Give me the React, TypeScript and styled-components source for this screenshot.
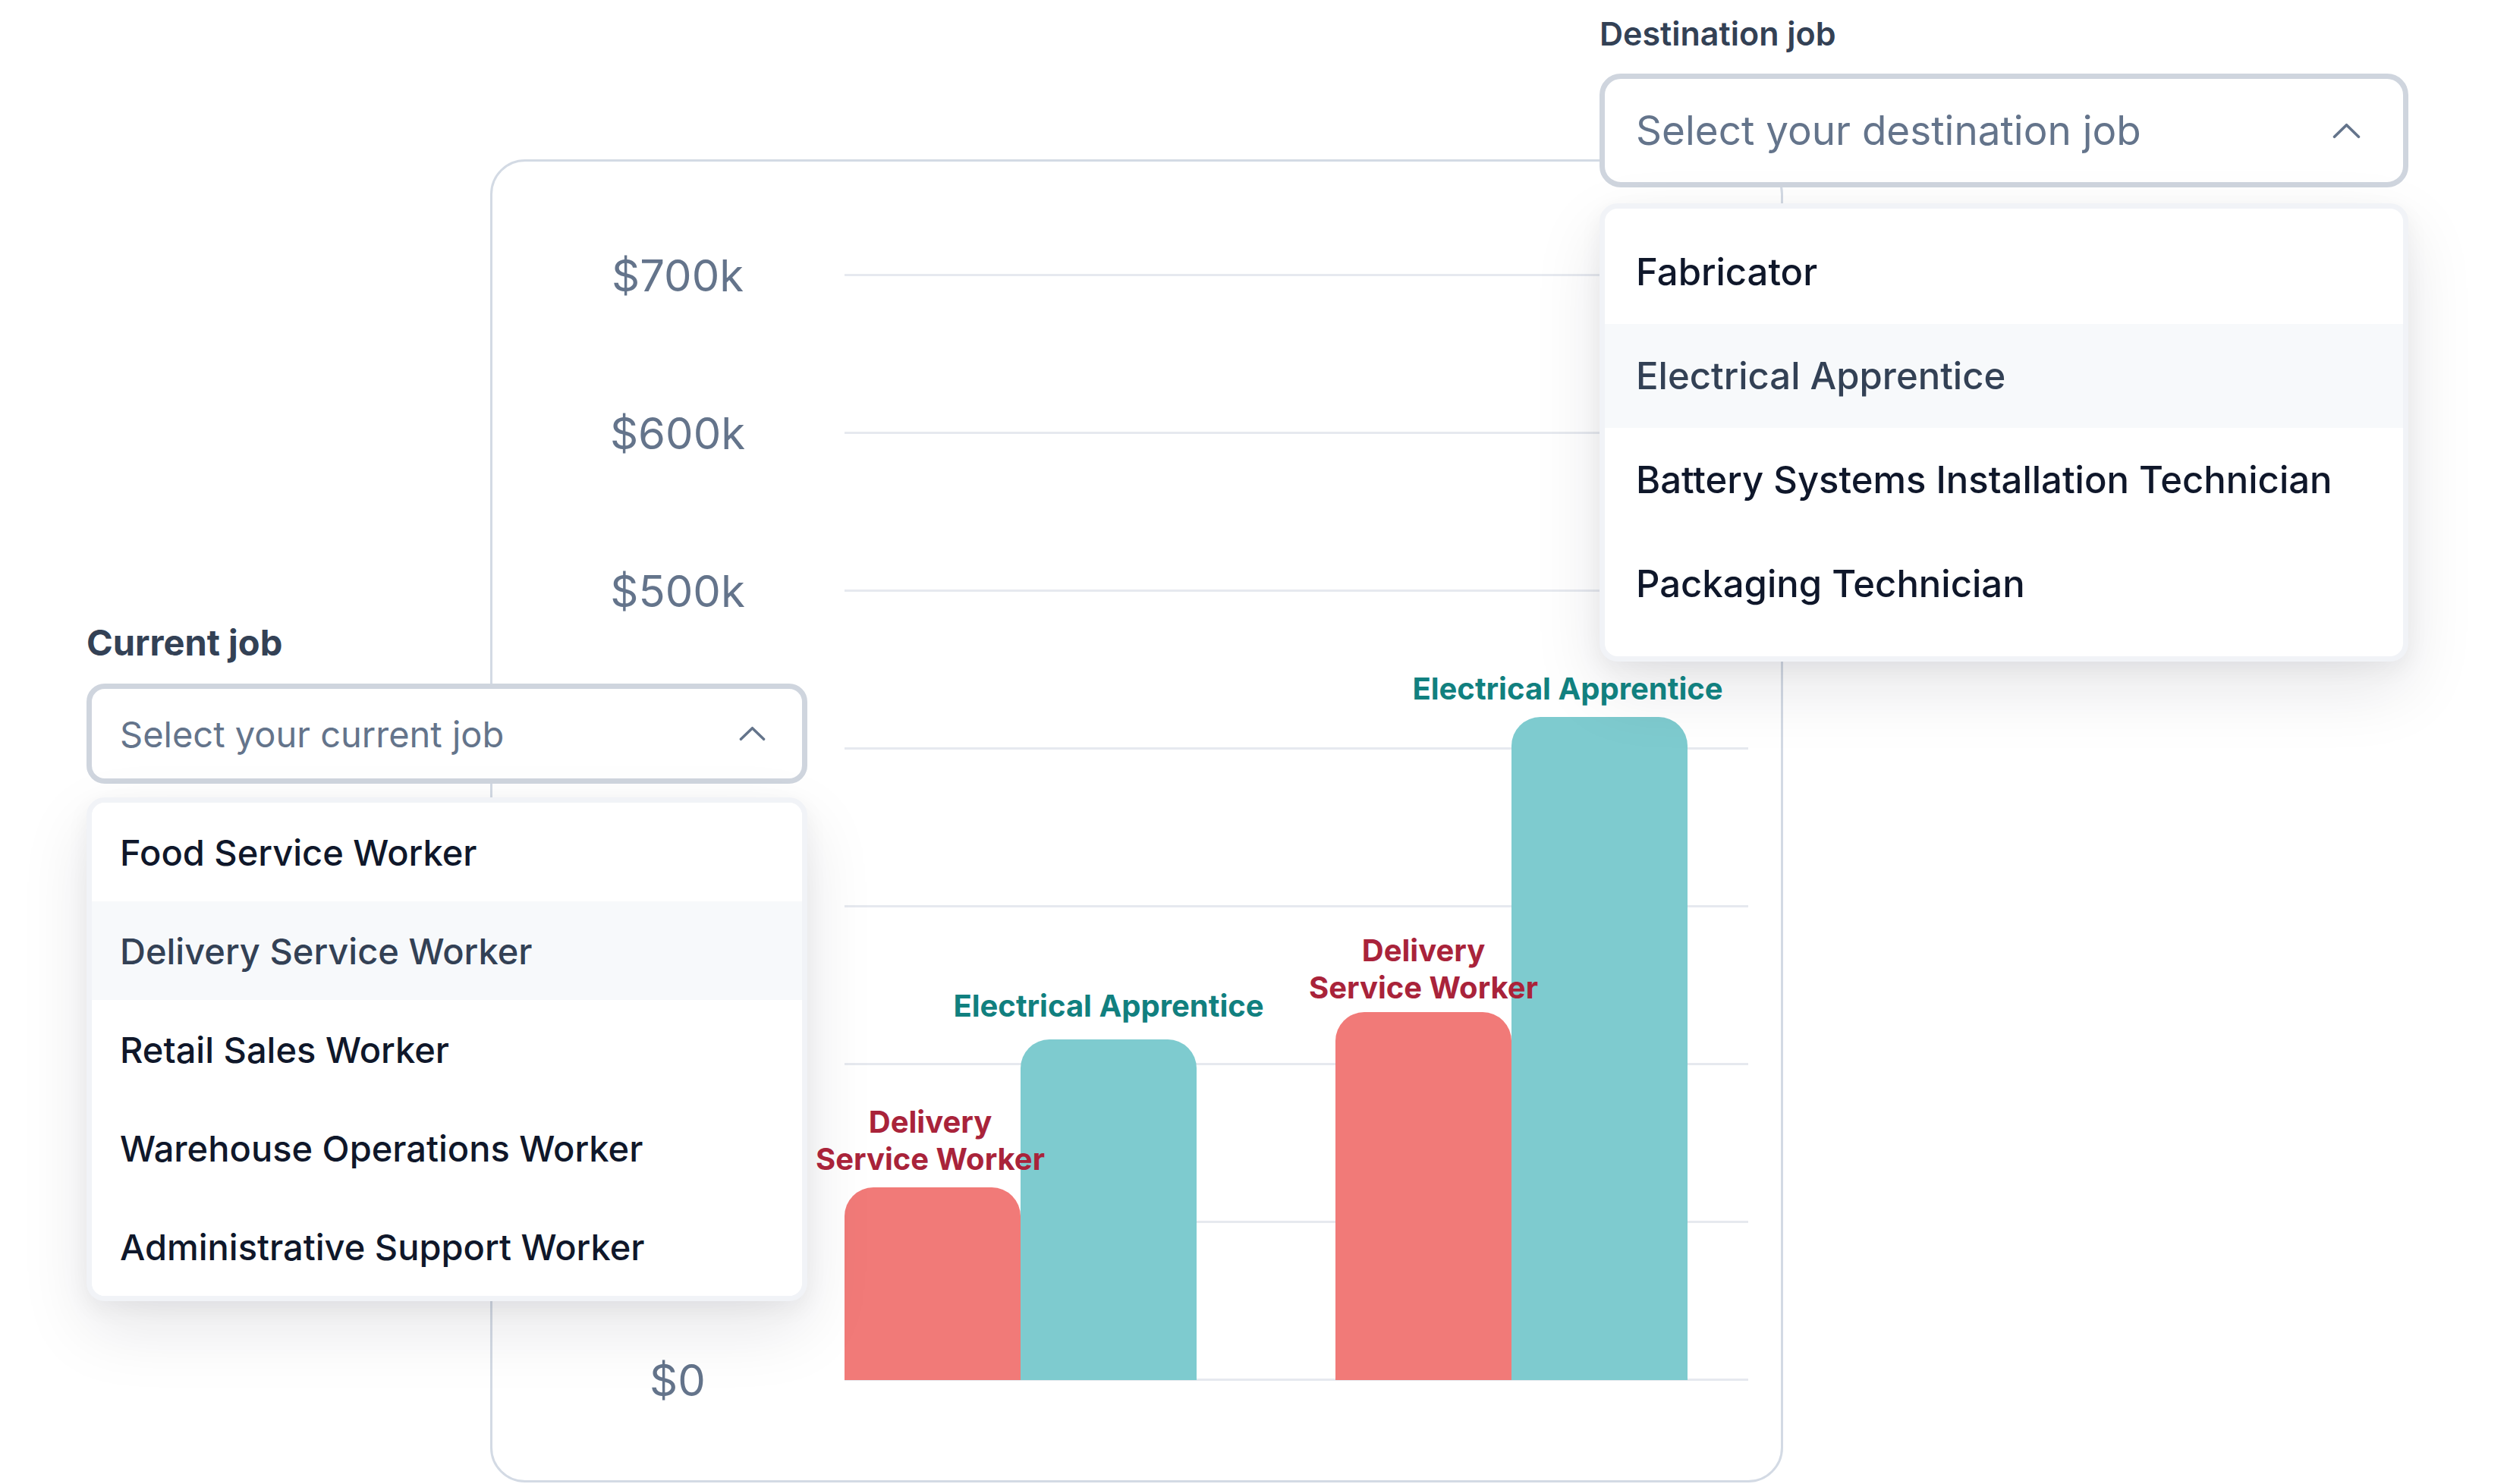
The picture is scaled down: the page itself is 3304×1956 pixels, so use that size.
import styled, { createGlobalStyle } from "styled-components";

const GlobalStyle = createGlobalStyle`
  html, body {
    margin: 0;
    padding: 0;
    background: #ffffff;
    font-family: Inter, "Noto Sans", sans-serif;
  }
  * { box-sizing: border-box; }
`;

type Tone = "red" | "teal";

const toneFill: Record<Tone, string> = { red: "#f17a78", teal: "#7ecbcf" };
const toneText: Record<Tone, string> = { red: "#a9233a", teal: "#11807f" };

const Stage = styled.div`
  position: relative;
  width: 3304px;
  height: 1956px;
  overflow: hidden;
  background: #ffffff;
`;

/* ---------- chart ---------- */

const ChartCard = styled.section`
  margin: 210px 0 0 646px;
  width: 1704px;
  height: 1744px;
  border: 3px solid #d3dae4;
  border-radius: 46px;
  background: #ffffff;
  display: flex;
  align-items: flex-start;
  padding-top: 148px;
`;

const AxisColumn = styled.div`
  margin-left: 124px;
  width: 240px;
  height: 1459px;
  display: flex;
  flex-direction: column;
  justify-content: space-between;
`;

// ticks behind the current-job dropdown stay in the layout but are not painted
const Tick = styled.div<{ $covered?: boolean }>`
  height: 3px;
  display: flex;
  align-items: center;
  justify-content: center;
  white-space: nowrap;
  font-size: 58px;
  line-height: 70px;
  color: #64748b;
  visibility: ${({ $covered }) => ($covered ? "hidden" : "visible")};
`;

const Plot = styled.div`
  margin-left: 100px;
  width: 1191px;
  height: 1459px;
  display: grid;
  grid-template: 1fr / 1fr;
`;

const GridLines = styled.div`
  grid-area: 1 / 1;
  display: flex;
  flex-direction: column;
  justify-content: space-between;
`;

const GridLine = styled.div`
  height: 3px;
  background: #e6e9ef;
`;

const BarRow = styled.div`
  grid-area: 1 / 1;
  display: flex;
  align-items: flex-end;
  gap: 183px;
  padding-bottom: 1px;
`;

const BarGroup = styled.div`
  display: flex;
  align-items: flex-end;
`;

const Bar = styled.div<{ $tone: Tone }>`
  position: relative;
  width: 232px;
  background: ${({ $tone }) => toneFill[$tone]};
  border-radius: 38px 38px 0 0;
`;

const BarLabel = styled.div<{ $tone: Tone; $shift?: number; $gap?: number }>`
  position: absolute;
  z-index: 2;
  bottom: calc(100% + ${({ $gap }) => $gap ?? 13}px);
  left: 50%;
  transform: translateX(calc(-50% + ${({ $shift }) => $shift ?? 0}px));
  white-space: nowrap;
  text-align: center;
  font-size: 40px;
  line-height: 49px;
  font-weight: 700;
  color: ${({ $tone }) => toneText[$tone]};
`;

/* ---------- selects ---------- */

type Size = {
  left: number;
  top: number;
  width: number;
  labelSize: number;
  labelWeight: number;
  labelGap: number;
  boxHeight: number;
  boxRadius: number;
  padLeft: number;
  padRight: number;
  placeholderSize: number;
  chevron: number;
  panelGap: number;
  panelPad: string;
  rowHeight: number;
  optionSize: number;
};

const SelectWidget = styled.div<{ $s: Size }>`
  position: absolute;
  left: ${({ $s }) => $s.left}px;
  top: ${({ $s }) => $s.top}px;
  width: ${({ $s }) => $s.width}px;
  display: flex;
  flex-direction: column;
`;

const FieldLabel = styled.label<{ $s: Size }>`
  font-size: ${({ $s }) => $s.labelSize}px;
  line-height: ${({ $s }) => Math.round($s.labelSize * 1.2)}px;
  font-weight: ${({ $s }) => $s.labelWeight};
  color: #334155;
  margin-bottom: ${({ $s }) => $s.labelGap}px;
`;

const SelectBox = styled.div<{ $s: Size }>`
  height: ${({ $s }) => $s.boxHeight}px;
  border: 7px solid #cfd5de;
  border-radius: ${({ $s }) => $s.boxRadius}px;
  background: #ffffff;
  display: flex;
  align-items: center;
  justify-content: space-between;
  padding: 0 ${({ $s }) => $s.padRight}px 0 ${({ $s }) => $s.padLeft}px;
`;

const Placeholder = styled.span<{ $s: Size }>`
  font-size: ${({ $s }) => $s.placeholderSize}px;
  color: #64748b;
  white-space: nowrap;
`;

const OptionPanel = styled.ul<{ $s: Size }>`
  list-style: none;
  margin: ${({ $s }) => $s.panelGap}px 0 0;
  padding: ${({ $s }) => $s.panelPad};
  border: 7px solid #f1f3f7;
  border-radius: 24px;
  background: #ffffff;
  overflow: hidden;
  box-shadow: 0 36px 90px rgba(15, 23, 42, 0.1), 0 10px 30px rgba(15, 23, 42, 0.05);
`;

const OptionRow = styled.li<{ $s: Size; $active?: boolean }>`
  height: ${({ $s }) => $s.rowHeight}px;
  display: flex;
  align-items: center;
  padding-left: ${({ $s }) => $s.padLeft}px;
  font-size: ${({ $s }) => $s.optionSize}px;
  font-weight: 500;
  white-space: nowrap;
  color: ${({ $active }) => ($active ? "#334155" : "#0f172a")};
  background: ${({ $active }) => ($active ? "#f7f9fb" : "#ffffff")};
`;

const ChevronUp = ({ width }: { width: number }) => (
  <svg width={width} height={Math.round(width * 0.56)} viewBox="0 0 36 20" fill="none">
    <polyline
      points="2.5,17.5 18,2.5 33.5,17.5"
      stroke="#64748b"
      strokeWidth="3.6"
      strokeLinecap="round"
      strokeLinejoin="round"
    />
  </svg>
);

const currentSize: Size = {
  left: 114,
  top: 819,
  width: 950,
  labelSize: 47,
  labelWeight: 700,
  labelGap: 26,
  boxHeight: 132,
  boxRadius: 24,
  padLeft: 37,
  padRight: 48,
  placeholderSize: 47,
  chevron: 35,
  panelGap: 18,
  panelPad: "0",
  rowHeight: 130,
  optionSize: 47,
};

const destinationSize: Size = {
  left: 2108,
  top: 18,
  width: 1066,
  labelSize: 43,
  labelWeight: 600,
  labelGap: 27,
  boxHeight: 150,
  boxRadius: 28,
  padLeft: 41,
  padRight: 56,
  placeholderSize: 53,
  chevron: 37,
  panelGap: 21,
  panelPad: "15px 0 27px",
  rowHeight: 137,
  optionSize: 49,
};

type SelectProps = {
  size: Size;
  label: string;
  placeholder: string;
  options: string[];
  active: number;
};

const JobSelect = ({ size, label, placeholder, options, active }: SelectProps) => (
  <SelectWidget $s={size}>
    <FieldLabel $s={size}>{label}</FieldLabel>
    <SelectBox $s={size}>
      <Placeholder $s={size}>{placeholder}</Placeholder>
      <ChevronUp width={size.chevron} />
    </SelectBox>
    <OptionPanel $s={size}>
      {options.map((o, i) => (
        <OptionRow key={o} $s={size} $active={i === active}>
          {o}
        </OptionRow>
      ))}
    </OptionPanel>
  </SelectWidget>
);

const ticks = [
  { label: "$700k" },
  { label: "$600k" },
  { label: "$500k" },
  { label: "$400k", covered: true },
  { label: "$300k", covered: true },
  { label: "$200k", covered: true },
  { label: "$100k", covered: true },
  { label: "$0" },
];

type BarData = { tone: Tone; value: number; label: string[]; shift?: number; gap?: number };

const PX_PER_K = 208 / 100;

const groups: BarData[][] = [
  [
    { tone: "red", value: 122, label: ["Delivery", "Service Worker"], shift: -3 },
    { tone: "teal", value: 216, label: ["Electrical Apprentice"], gap: 20 },
  ],
  [
    { tone: "red", value: 233, label: ["Delivery", "Service Worker"], gap: 8 },
    { tone: "teal", value: 420, label: ["Electrical Apprentice"], shift: -42 },
  ],
];

export default function App() {
  return (
    <>
      <GlobalStyle />
      <Stage>
        <ChartCard>
          <AxisColumn>
            {ticks.map((t) => (
              <Tick key={t.label} $covered={t.covered}>
                {t.label}
              </Tick>
            ))}
          </AxisColumn>
          <Plot>
            <GridLines>
              {ticks.map((t) => (
                <GridLine key={t.label} />
              ))}
            </GridLines>
            <BarRow>
              {groups.map((g, gi) => (
                <BarGroup key={gi}>
                  {g.map((b, bi) => (
                    <Bar key={bi} $tone={b.tone} style={{ height: Math.round(b.value * PX_PER_K) }}>
                      <BarLabel $tone={b.tone} $shift={b.shift} $gap={b.gap}>
                        {b.label.map((line, li) => (
                          <div key={li}>{line}</div>
                        ))}
                      </BarLabel>
                    </Bar>
                  ))}
                </BarGroup>
              ))}
            </BarRow>
          </Plot>
        </ChartCard>

        <JobSelect
          size={currentSize}
          label="Current job"
          placeholder="Select your current job"
          options={[
            "Food Service Worker",
            "Delivery Service Worker",
            "Retail Sales Worker",
            "Warehouse Operations Worker",
            "Administrative Support Worker",
          ]}
          active={1}
        />

        <JobSelect
          size={destinationSize}
          label="Destination job"
          placeholder="Select your destination job"
          options={[
            "Fabricator",
            "Electrical Apprentice",
            "Battery Systems Installation Technician",
            "Packaging Technician",
          ]}
          active={1}
        />
      </Stage>
    </>
  );
}
